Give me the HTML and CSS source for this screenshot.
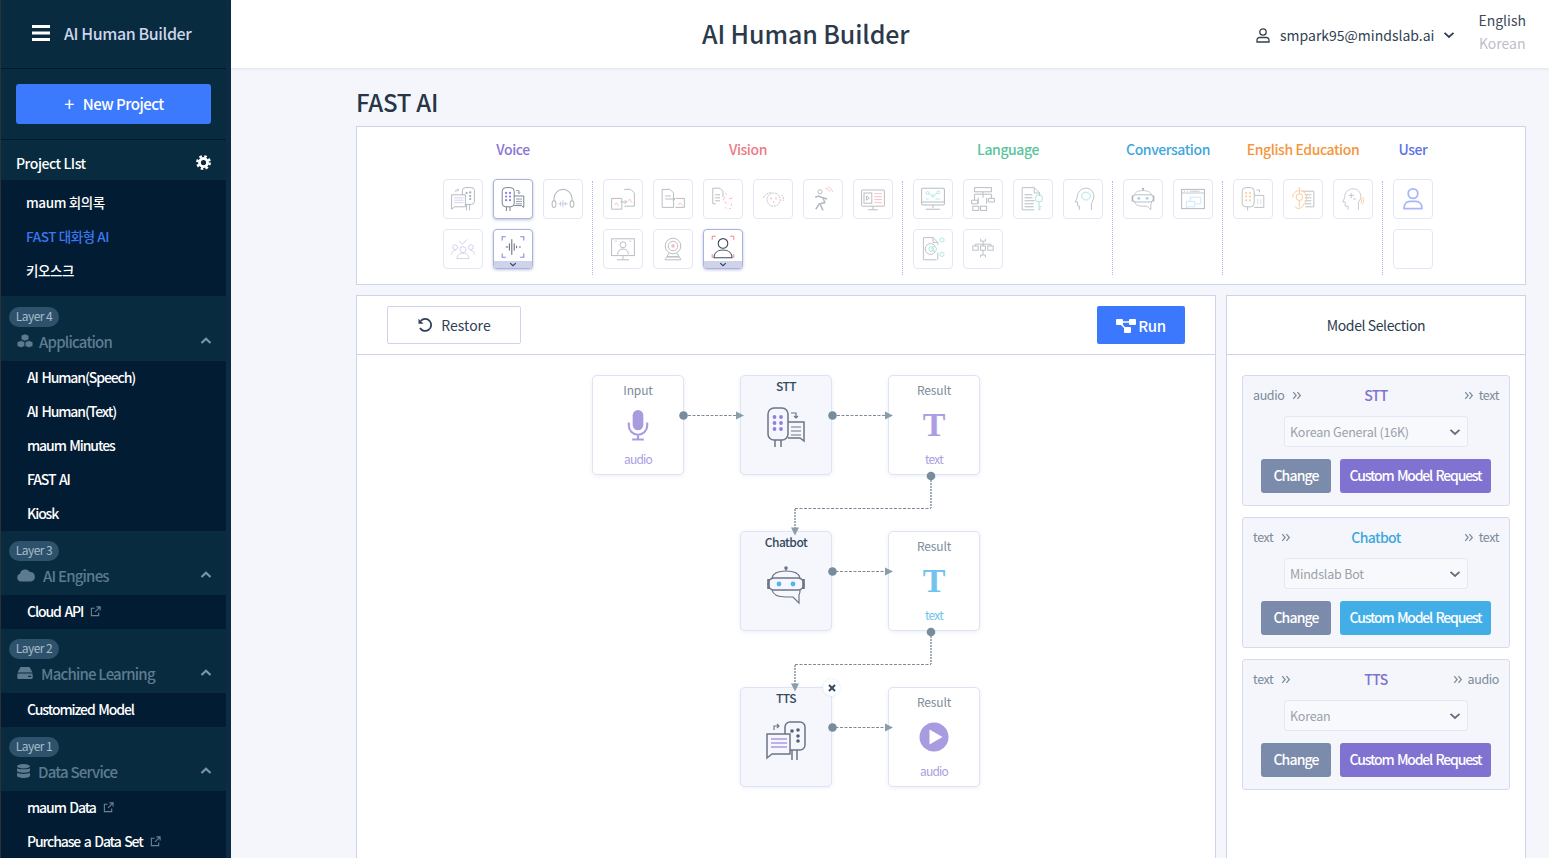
FILE: index.html
```html
<!DOCTYPE html>
<html lang="en">
<head>
<meta charset="utf-8">
<title>AI Human Builder</title>
<link rel="stylesheet" href="styles.css">
</head>
<body>
<svg class="defs" aria-hidden="true">
  <symbol id="i-stt" viewBox="0 0 40 40">
    <g fill="none" stroke="#6b7686" stroke-width="1.5">
      <path d="M22 15h16v19l-4-3H22"/><path d="M25 20h10M25 24h10M25 28h10" stroke-width="1.2"/>
      <rect x="2" y="1" width="20" height="32" rx="6"/>
      <path d="M9 33v7M15 33v7"/><path d="M25 6h5v5m-2-2l2 2 2-2" stroke-width="1.2"/>
    </g>
    <g fill="#8f7fe0"><circle cx="8.5" cy="10" r="1.9"/><circle cx="15" cy="10" r="1.9"/><circle cx="8.5" cy="16" r="1.9"/><circle cx="15" cy="16" r="1.9"/><circle cx="8.5" cy="22" r="1.9"/><circle cx="15" cy="22" r="1.9"/></g>
  </symbol>
  <symbol id="i-tts" viewBox="0 0 40 40">
    <g fill="none" stroke="#6b7686" stroke-width="1.5">
      <path d="M19 13V6a5 5 0 0 1 5-5h10a5 5 0 0 1 5 5v18a5 5 0 0 1-5 5h-10"/>
      <path d="M26 29v10M31 29v10"/>
      <path d="M1 13h23v20H6l-5 4z"/><path d="M8 9V5h5m-2-2l2 2-2 2" stroke-width="1.2"/>
    </g>
    <path d="M5 18h16M5 22h16M5 26h16" stroke="#a99be6" stroke-width="1.3"/>
    <g fill="#55606e"><circle cx="26" cy="10" r="1.8"/><circle cx="32" cy="9" r="1.8"/><circle cx="32" cy="15" r="1.8"/><circle cx="32" cy="20" r="1.8"/></g>
  </symbol>
  <symbol id="i-bot" viewBox="0 0 40 40">
    <g fill="none" stroke="#6b7686" stroke-width="1.2">
      <path d="M6 13c1-5 7-7 14-7s13 2 14 7M6 25c1 5 7 7 14 7h7l6 6v-8c1-1 1-3 1-5"/><path d="M20 6V3"/>
      <rect x="2" y="13" width="36" height="12" rx="6" stroke-width="1.4"/>
      <path d="M2.5 14v10M37.5 14v10" stroke-width="2.6"/>
    </g>
    <circle cx="20" cy="3" r="1.8" fill="#6b7686"/><circle cx="13" cy="19" r="2.4" fill="#4fb6ef"/><circle cx="27" cy="19" r="2.4" fill="#4fb6ef"/>
  </symbol>
  <symbol id="i-phones" viewBox="0 0 40 40">
    <g fill="none" stroke="#7d8590" stroke-width="1.8"><path d="M5 24v-5a15 15 0 0 1 30 0v5"/><rect x="2" y="23" width="6" height="11" rx="3"/><rect x="32" y="23" width="6" height="11" rx="3"/></g>
    <path d="M12 28h16M16 24v8M20 22v12M24 25v6" stroke="#9aa3c9" stroke-width="1.5" fill="none"/>
  </symbol>
  <symbol id="i-crowd" viewBox="0 0 40 40">
    <g fill="none" stroke="#a79be0" stroke-width="1.4"><circle cx="20" cy="21" r="5"/><path d="M10 36c0-6 4-9 10-9s10 3 10 9z"/><circle cx="7" cy="17" r="4"/><circle cx="33" cy="17" r="4"/><path d="M1 29c0-4 3-7 7-7M39 29c0-4-3-7-7-7M13 7l6 5 8-8"/></g>
  </symbol>
  <symbol id="i-wave" viewBox="0 0 40 40">
    <path d="M2 9V3h6M32 3h6v6M38 31v6h-6M8 37H2v-6" fill="none" stroke="#8f7fe0" stroke-width="1.8"/>
    <path d="M8 20h4M14 14v12M18 7v26M22 14v12M26 18v4M30 20h3" fill="none" stroke="#3f4a5a" stroke-width="1.4"/>
  </symbol>
  <symbol id="i-v1" viewBox="0 0 40 40">
    <g fill="none" stroke="#7d8590" stroke-width="1.6"><path d="M1 19h17v18H1zM22 4h11l6 6v22H22"/><path d="M16 25h10m-3-3l3 3-3 3"/></g>
    <path d="M6 30l3-4 4 6M28 24l3-4 4 6" fill="none" stroke="#f17d87" stroke-width="1.3"/>
  </symbol>
  <symbol id="i-v2" viewBox="0 0 40 40">
    <g fill="none" stroke="#7d8590" stroke-width="1.6"><path d="M2 4h13l6 6v24H2zM7 15h9M7 20h16m-3-3l3 3-3 3M24 19h15v15H24"/></g>
    <path d="M29 30l3-4 4 5" fill="none" stroke="#f17d87" stroke-width="1.3"/>
  </symbol>
  <symbol id="i-v3" viewBox="0 0 40 40">
    <g fill="none" stroke="#7d8590" stroke-width="1.6"><path d="M8 28H3V2h12l5 5v10M7 13h8M7 18h8M7 23h8"/></g>
    <path d="M24 10l2 3M30 20l6-2M22 24l4 4M34 28v3M30 36h3M24 34l2 2M20 22l3-5" fill="none" stroke="#f17d87" stroke-width="1.6"/>
  </symbol>
  <symbol id="i-v4" viewBox="0 0 40 40">
    <g fill="none" stroke="#7d8590" stroke-width="1.5" stroke-dasharray="3 1.5"><circle cx="21" cy="21" r="11"/><path d="M4 18c2-6 8-9 14-8M34 13c3 2 4 6 3 10"/></g>
    <g fill="#f17d87"><circle cx="17" cy="19" r="1.4"/><circle cx="25" cy="19" r="1.4"/><circle cx="21" cy="25" r="1.4"/></g>
  </symbol>
  <symbol id="i-v5" viewBox="0 0 40 40">
    <g fill="none" stroke="#7d8590" stroke-width="2.6"><circle cx="15" cy="8" r="3.5" stroke-width="1.6"/><path d="M12 15l8 3 3 8-8 2 5 11M14 28l-6 9M7 17l6-2M20 18l7 2"/></g>
    <path d="M24 2c4 1 6 3 7 6M28 0c4 1 7 4 8 8" fill="none" stroke="#f17d87" stroke-width="1.4"/>
  </symbol>
  <symbol id="i-v6" viewBox="0 0 40 40">
    <g fill="none" stroke="#7d8590" stroke-width="1.6"><rect x="1" y="5" width="38" height="27" rx="1"/><rect x="5" y="10" width="13" height="17"/><path d="M9 15v7l5-3.5zM20 38V32M12 38h16"/></g>
    <path d="M22 11h13M22 16h13M22 21h13M22 26h13" stroke="#f17d87" stroke-width="1.4"/>
  </symbol>
  <symbol id="i-v7" viewBox="0 0 40 40">
    <g fill="none" stroke="#7d8590" stroke-width="1.6"><rect x="1" y="3" width="38" height="28"/><circle cx="20" cy="13" r="5"/><path d="M11 29c0-6 4-9 9-9s9 3 9 9M20 31v6M10 38h20"/></g>
    <path d="M6 7h4M30 7h4" stroke="#f17d87" stroke-width="1.4"/>
  </symbol>
  <symbol id="i-v8" viewBox="0 0 40 40">
    <g fill="none" stroke="#7d8590" stroke-width="1.6"><circle cx="20" cy="15" r="13"/><circle cx="20" cy="15" r="8"/><path d="M13 27l-3 6h20l-3-6M7 38c0-3 2-5 5-5h16c3 0 5 2 5 5z"/></g>
    <circle cx="20" cy="15" r="3" fill="#f17d87"/>
  </symbol>
  <symbol id="i-face" viewBox="0 0 40 40">
    <path d="M2 8V2h6M32 2h6v6M38 32v6M2 32v6" fill="none" stroke="#f17d87" stroke-width="1.6"/>
    <g fill="none" stroke="#3f4a5a" stroke-width="1.8"><circle cx="20" cy="14" r="8"/><path d="M5 38c0-8 6-13 15-13s15 5 15 13z"/></g>
  </symbol>
  <symbol id="i-l1" viewBox="0 0 40 40">
    <g fill="none" stroke="#7d8590" stroke-width="1.7"><rect x="1" y="2" width="38" height="28" rx="2"/><path d="M1 25h38M20 30v5M8 37h24"/></g>
    <g fill="none" stroke="#5fd0bd" stroke-width="1.3"><circle cx="11" cy="10" r="2.5"/><circle cx="29" cy="9" r="2.5"/><circle cx="20" cy="15" r="2"/><path d="M13 11l5 3M22 14l5-4M8 20h5M24 20h8"/></g>
  </symbol>
  <symbol id="i-l2" viewBox="0 0 40 40">
    <g fill="none" stroke="#7d8590" stroke-width="1.6"><rect x="6" y="1" width="28" height="7"/><path d="M20 8v10M20 12h14M20 12H6v10M34 12v7M12 18v10M26 18v10"/><path d="M1 22h10v6H1zM29 19h10v6H29z"/><rect x="3" y="32" width="10" height="7"/><rect x="16" y="32" width="10" height="7"/></g>
  </symbol>
  <symbol id="i-l3" viewBox="0 0 40 40">
    <g fill="none" stroke="#7d8590" stroke-width="1.5"><path d="M22 38H2V1h20l9 9v5M22 1v9h9"/><path d="M6 13h13M6 18h13M6 23h17M6 28h15M6 33h15" stroke-width="1.8"/></g>
    <g fill="none" stroke="#5fd0bd" stroke-width="1.6"><circle cx="30" cy="19" r="6"/><path d="M30 25v14M30 33h4M30 37h3"/></g>
  </symbol>
  <symbol id="i-l4" viewBox="0 0 40 40">
    <path d="M14 38v-6l-3-1V25H7l3-6C10 9 17 2 25 2s13 6 13 14c0 6-3 9-4 12v10" fill="none" stroke="#7d8590" stroke-width="1.5"/>
    <path d="M18 14c0-5 7-7 10-4 5 0 6 7 2 9-2 4-9 3-10 0-2-1-3-3-2-5z" fill="none" stroke="#5fd0bd" stroke-width="1.6"/>
  </symbol>
  <symbol id="i-l5" viewBox="0 0 40 40">
    <g fill="none" stroke="#7d8590" stroke-width="1.5"><path d="M26 38H4V1h16l8 8v4M20 1v8h8M28 26v12"/><path d="M24 16a9 9 0 1 0 0 8"/></g>
    <g fill="none" stroke="#5fd0bd" stroke-width="1.5"><circle cx="35" cy="5" r="3.5"/><circle cx="35" cy="29" r="3.5"/><circle cx="17" cy="20" r="4"/><circle cx="22" cy="20" r="4"/></g>
  </symbol>
  <symbol id="i-l6" viewBox="0 0 40 40">
    <g fill="none" stroke="#7d8590" stroke-width="1.5"><rect x="3" y="15" width="9" height="7"/><rect x="28" y="15" width="9" height="7"/><rect x="16" y="15" width="8" height="7"/><path d="M16 3v4h8V3M20 7v8M20 22v8M16 34v-4h8v4M7 15v-3h26v3"/></g>
  </symbol>
  <symbol id="i-c2" viewBox="0 0 40 40">
    <g fill="none" stroke="#7d8590" stroke-width="1.7"><rect x="1" y="4" width="38" height="32"/><path d="M1 10h38M5 7h2M10 7h2M15 7h16" stroke-width="1.3"/></g>
    <g fill="none" stroke="#8fd3f5" stroke-width="1.4"><path d="M16 17h17v11H16z"/><path d="M9 24h14v9H12l-3 2z" fill="#fff"/></g>
  </symbol>
  <symbol id="i-e1" viewBox="0 0 40 40">
    <g fill="none" stroke="#7d8590" stroke-width="1.5"><rect x="2" y="1" width="20" height="32" rx="6"/><path d="M11 33v6M22 14h16v20H22M26 5h5v4"/><path d="M28 20v9M33 20v9" stroke="#b6bcc6"/></g>
    <g fill="#f8a24d"><circle cx="8.5" cy="10" r="1.7"/><circle cx="15" cy="10" r="1.7"/><circle cx="8.5" cy="16" r="1.7"/><circle cx="15" cy="16" r="1.7"/><circle cx="8.5" cy="22" r="1.7"/><circle cx="15" cy="22" r="1.7"/></g>
  </symbol>
  <symbol id="i-e2" viewBox="0 0 40 40">
    <g fill="none" stroke="#7d8590" stroke-width="1.5"><path d="M18 7h20v26H24"/><path d="M23 13h11M23 18h11M23 23h11M23 28h11"/></g>
    <g fill="none" stroke="#f8a24d" stroke-width="1.6"><path d="M3 18C3 9 9 6 14 6s12 3 12 12c0 6-3 9-5 11-2 7-11 10-14 3"/><circle cx="14" cy="17" r="5.5"/><path d="M14 0v12M14 22v12"/></g>
  </symbol>
  <symbol id="i-e3" viewBox="0 0 40 40">
    <path d="M12 38v-6H7v-7H3l3-7C6 9 12 3 20 3s13 6 13 13c0 4-2 7-4 9v13" fill="none" stroke="#8d949e" stroke-width="1.4"/>
    <path d="M13 14h9M17 10v9M20 20h5" fill="none" stroke="#7d8590" stroke-width="1.3"/>
    <path d="M33 19c1.500 2 1.500 6 0 8M36 17c2 3 2 9 0 12" fill="none" stroke="#f8a24d" stroke-width="1.5"/>
  </symbol>
  <symbol id="i-user" viewBox="0 0 40 40">
    <g fill="none" stroke="#a8b7f7" stroke-width="3"><circle cx="20" cy="11" r="8"/><path d="M5 36c0-8 5-12 10-12h10c5 0 10 4 10 12z" stroke-linejoin="round"/></g>
  </symbol>
  <symbol id="i-ext" viewBox="0 0 12 12">
    <path d="M9.5 7v3.500h-8v-8H5M7 1h4v4M11 1L5.500 6.500" fill="none" stroke="currentColor" stroke-width="1.2"/>
  </symbol>
  <symbol id="i-up" viewBox="0 0 12 8">
    <path d="M1.500 6L6 1.800 10.500 6" fill="none" stroke="currentColor" stroke-width="2.2"/>
  </symbol>
  <symbol id="i-down" viewBox="0 0 12 8">
    <path d="M1.500 1.800L6 6l4.500-4.200" fill="none" stroke="currentColor" stroke-width="1.8"/>
  </symbol>
  <symbol id="i-dbl" viewBox="0 0 12 10">
    <path d="M1.500 1L5 5 1.500 9M6.500 1L10 5 6.500 9" fill="none" stroke="currentColor" stroke-width="1.5"/>
  </symbol>
</svg>

<aside class="sidebar">
  <div class="side-inner">
    <div class="side-top">
      <svg class="burger" viewBox="0 0 18 16"><path d="M0 1.500h18M0 8h18M0 14.500h18" stroke="#fff" stroke-width="3"/></svg>
      <span class="side-brand">AI Human Builder</span>
    </div>
    <div class="side-new"><button class="new-btn"><span class="plus">+</span>New Project</button></div>
    <div class="plist-head">
      <span>Project LIst</span>
      <svg class="gear" viewBox="0 0 16 16"><circle cx="8" cy="8" r="4.3" fill="none" stroke="#fff" stroke-width="3"/><circle cx="8" cy="8" r="6.6" fill="none" stroke="#fff" stroke-width="2.6" stroke-dasharray="2.7 2.48"/></svg>
    </div>
    <ul class="plist">
      <li>maum 회의록</li>
      <li class="current">FAST 대화형 AI</li>
      <li>키오스크</li>
    </ul>
    <div class="layers">
      <section>
        <div class="layer-head">
          <span class="pill">Layer 4</span>
          <div class="layer-title">
            <svg class="li li-cubes" viewBox="0 0 16 14"><g fill="#5d7b90" stroke="#082b40" stroke-width=".5"><path d="M8 0l3.800 1.400v4.200L8 7 4.200 5.600V1.400z"/><path d="M4 6.600l3.800 1.400v4.200L4 13.600.2 12.200V8zM12 6.600L15.800 8v4.200L12 13.600l-3.800-1.400V8z"/></g></svg>
            <span>Application</span>
            <svg class="chev"><use href="#i-up"/></svg>
          </div>
        </div>
        <ul class="sub">
          <li>AI Human(Speech)</li><li>AI Human(Text)</li><li>maum Minutes</li><li>FAST AI</li><li>Kiosk</li>
        </ul>
      </section>
      <section>
        <div class="layer-head">
          <span class="pill">Layer 3</span>
          <div class="layer-title">
            <svg class="li li-cloud" viewBox="0 0 18 13"><path d="M4 13a4 4 0 0 1-1-7.800A5.500 5.500 0 0 1 13 3.500 4.800 4.800 0 0 1 14 13z" fill="#5d7b90"/></svg>
            <span>AI Engines</span>
            <svg class="chev"><use href="#i-up"/></svg>
          </div>
        </div>
        <ul class="sub">
          <li>Cloud API<svg class="ext"><use href="#i-ext"/></svg></li>
        </ul>
      </section>
      <section>
        <div class="layer-head">
          <span class="pill">Layer 2</span>
          <div class="layer-title">
            <svg class="li li-hdd" viewBox="0 0 16 12"><path d="M3.500 0h9L15.500 5.500H.5zM1.500 6.500h13a1.200 1.200 0 0 1 1.200 1.200v3a1.200 1.200 0 0 1-1.200 1.200h-13A1.200 1.200 0 0 1 .3 10.700v-3a1.200 1.200 0 0 1 1.200-1.200z" fill="#5d7b90"/><path d="M11 9.300h3.200" stroke="#0a2c41" stroke-width="1.2"/></svg>
            <span>Machine Learning</span>
            <svg class="chev"><use href="#i-up"/></svg>
          </div>
        </div>
        <ul class="sub">
          <li>Customized Model</li>
        </ul>
      </section>
      <section>
        <div class="layer-head">
          <span class="pill">Layer 1</span>
          <div class="layer-title">
            <svg class="li li-db" viewBox="0 0 13 14"><g fill="#5d7b90"><ellipse cx="6.500" cy="2.200" rx="6.500" ry="2.200"/><path d="M0 4.200c1.500 1.500 11.500 1.500 13 0v2.500c0 2.600-13 2.600-13 0zM0 8.800c1.500 1.500 11.500 1.500 13 0v3c0 2.900-13 2.900-13 0z"/></g></svg>
            <span>Data Service</span>
            <svg class="chev"><use href="#i-up"/></svg>
          </div>
        </div>
        <ul class="sub">
          <li>maum Data<svg class="ext"><use href="#i-ext"/></svg></li>
          <li>Purchase a Data Set<svg class="ext"><use href="#i-ext"/></svg></li>
        </ul>
      </section>
    </div>
  </div>
</aside>

<div class="main">
  <header class="topbar">
    <h1 class="top-title">AI Human Builder</h1>
    <div class="account">
      <svg class="acc-icon" viewBox="0 0 14 15"><g fill="none" stroke="#333f4d" stroke-width="1.3"><circle cx="7" cy="4" r="3.2"/><path d="M1 14v-2a2.500 2.500 0 0 1 2.500-2.500h7A2.500 2.500 0 0 1 13 12v2z"/></g></svg>
      <span class="email">smpark95@mindslab.ai</span>
      <svg class="acc-chev"><use href="#i-down"/></svg>
    </div>
    <div class="langs"><span class="lang-on">English</span><span class="lang-off">Korean</span></div>
  </header>

  <div class="content">
    <h2 class="page-title">FAST AI</h2>

    <div class="toolbox">
      <div class="tgroup t-voice">
        <h3>Voice</h3>
        <div class="ticons">
          <button class="tb dim"><svg><use href="#i-tts"/></svg></button>
          <button class="tb on"><svg><use href="#i-stt"/></svg></button>
          <button class="tb dim"><svg><use href="#i-phones"/></svg></button>
          <button class="tb dim"><svg><use href="#i-crowd"/></svg></button>
          <button class="tb on more"><svg><use href="#i-wave"/></svg><span class="band"><svg><use href="#i-down"/></svg></span></button>
        </div>
      </div>
      <div class="tgroup t-vision">
        <h3>Vision</h3>
        <div class="ticons">
          <button class="tb dim"><svg><use href="#i-v1"/></svg></button>
          <button class="tb dim"><svg><use href="#i-v2"/></svg></button>
          <button class="tb dim"><svg><use href="#i-v3"/></svg></button>
          <button class="tb dim"><svg><use href="#i-v4"/></svg></button>
          <button class="tb dim"><svg><use href="#i-v5"/></svg></button>
          <button class="tb dim"><svg><use href="#i-v6"/></svg></button>
          <button class="tb dim"><svg><use href="#i-v7"/></svg></button>
          <button class="tb dim"><svg><use href="#i-v8"/></svg></button>
          <button class="tb on more"><svg><use href="#i-face"/></svg><span class="band"><svg><use href="#i-down"/></svg></span></button>
        </div>
      </div>
      <div class="tgroup t-lang">
        <h3>Language</h3>
        <div class="ticons">
          <button class="tb dim"><svg><use href="#i-l1"/></svg></button>
          <button class="tb dim"><svg><use href="#i-l2"/></svg></button>
          <button class="tb dim"><svg><use href="#i-l3"/></svg></button>
          <button class="tb dim"><svg><use href="#i-l4"/></svg></button>
          <button class="tb dim"><svg><use href="#i-l5"/></svg></button>
          <button class="tb dim"><svg><use href="#i-l6"/></svg></button>
        </div>
      </div>
      <div class="tgroup t-conv">
        <h3>Conversation</h3>
        <div class="ticons">
          <button class="tb dim"><svg><use href="#i-bot"/></svg></button>
          <button class="tb dim"><svg><use href="#i-c2"/></svg></button>
        </div>
      </div>
      <div class="tgroup t-eng">
        <h3>English Education</h3>
        <div class="ticons">
          <button class="tb dim"><svg><use href="#i-e1"/></svg></button>
          <button class="tb dim"><svg><use href="#i-e2"/></svg></button>
          <button class="tb dim"><svg><use href="#i-e3"/></svg></button>
        </div>
      </div>
      <div class="tgroup t-user">
        <h3>User</h3>
        <div class="ticons">
          <button class="tb"><svg><use href="#i-user"/></svg></button>
          <button class="tb"></button>
        </div>
      </div>
    </div>

    <div class="work">
      <section class="flow-panel">
        <div class="flow-bar">
          <button class="restore">
            <svg viewBox="0 0 16 16"><path d="M3.800 3.800A6 6 0 1 1 3 11" fill="none" stroke="#2f4059" stroke-width="1.8"/><path d="M1.500 1.800v5h5z" fill="#2f4059"/></svg>
            Restore
          </button>
          <button class="run">
            <svg viewBox="0 0 20 15"><g fill="#fff"><rect x="0" y="1" width="7" height="6" rx="1"/><rect x="13" y="1" width="7" height="6" rx="1"/><rect x="8" y="9" width="7" height="6" rx="1"/></g><path d="M5 4h10M4 5l7 7" stroke="#fff" stroke-width="1.6"/></svg>
            Run
          </button>
        </div>
        <div class="canvas">
          <svg class="wires" viewBox="357 355 858 503">
            <g class="wire">
              <path d="M688 415.500h48M837 415.500h48M831 571.500h54M831 727.500h54M795 508.500h136M795 664.500h136"/>
              <path class="wv" d="M931 480v28M795 509v19M931 636v28M795 665v19"/>
            </g>
            <g fill="#8b9dab">
              <path d="M736 411.500l8 4-8 4zM885 411.500l8 4-8 4zM885 567.500l8 4-8 4zM885 723.500l8 4-8 4z"/>
              <path d="M791 527.500h8l-4 8zM791 683.500h8l-4 8z"/>
            </g>
            <g fill="#778c9c">
              <circle cx="683.500" cy="415.500" r="4.300"/><circle cx="832.500" cy="415.500" r="4.300"/><circle cx="931" cy="476" r="4.300"/>
              <circle cx="832.500" cy="571.500" r="4.300"/><circle cx="931" cy="632" r="4.300"/><circle cx="832.500" cy="727.500" r="4.300"/>
            </g>
          </svg>

          <div class="node col-a row-1">
            <span class="n-label">Input</span>
            <svg class="n-mic" viewBox="0 0 22 32"><rect x="5.500" y="0" width="11" height="21" rx="5.500" fill="#a99be0"/><path d="M1.500 13v3a9.500 9.500 0 0 0 19 0v-3M11 26v4M5 30.500h12" fill="none" stroke="#a99be0" stroke-width="2.2"/></svg>
            <span class="n-type purple">audio</span>
          </div>
          <div class="node model col-b row-1">
            <span class="n-name">STT</span>
            <svg class="n-icon"><use href="#i-stt"/></svg>
          </div>
          <div class="node col-c row-1">
            <span class="n-label">Result</span>
            <span class="n-t purple">T</span>
            <span class="n-type purple">text</span>
          </div>
          <div class="node model col-b row-2">
            <span class="n-name">Chatbot</span>
            <svg class="n-icon low"><use href="#i-bot"/></svg>
          </div>
          <div class="node col-c row-2">
            <span class="n-label">Result</span>
            <span class="n-t sky">T</span>
            <span class="n-type sky">text</span>
          </div>
          <div class="node model col-b row-3">
            <span class="n-name">TTS</span>
            <svg class="n-icon low"><use href="#i-tts"/></svg>
            <span class="n-close"><svg viewBox="0 0 10 10"><path d="M2 2l6 6M8 2l-6 6" stroke="#2f4a66" stroke-width="2"/></svg></span>
          </div>
          <div class="node col-c row-3">
            <span class="n-label">Result</span>
            <svg class="n-play" viewBox="0 0 30 30"><circle cx="15" cy="15" r="14.500" fill="#a99be0"/><path d="M10.500 7.500l13 7.500-13 7.500z" fill="#fff"/></svg>
            <span class="n-type purple">audio</span>
          </div>
        </div>
      </section>

      <section class="model-panel">
        <div class="model-head">Model Selection</div>
        <div class="model-list">
          <div class="mcard">
            <div class="mrow">
              <span class="mio">audio<svg><use href="#i-dbl"/></svg></span>
              <span class="mname c-purple">STT</span>
              <span class="mio right"><svg><use href="#i-dbl"/></svg>text</span>
            </div>
            <div class="msel">Korean General (16K)<svg><use href="#i-down"/></svg></div>
            <div class="mbtns"><button class="mchange">Change</button><button class="mcustom">Custom Model Request</button></div>
          </div>
          <div class="mcard">
            <div class="mrow">
              <span class="mio">text<svg><use href="#i-dbl"/></svg></span>
              <span class="mname c-sky">Chatbot</span>
              <span class="mio right"><svg><use href="#i-dbl"/></svg>text</span>
            </div>
            <div class="msel">Mindslab Bot<svg><use href="#i-down"/></svg></div>
            <div class="mbtns"><button class="mchange">Change</button><button class="mcustom sky-btn">Custom Model Request</button></div>
          </div>
          <div class="mcard">
            <div class="mrow">
              <span class="mio">text<svg><use href="#i-dbl"/></svg></span>
              <span class="mname c-purple">TTS</span>
              <span class="mio right"><svg><use href="#i-dbl"/></svg>audio</span>
            </div>
            <div class="msel">Korean<svg><use href="#i-down"/></svg></div>
            <div class="mbtns"><button class="mchange">Change</button><button class="mcustom">Custom Model Request</button></div>
          </div>
        </div>
      </section>
    </div>
  </div>
</div>
</body>
</html>
```
FILE: styles.css
```css
* { box-sizing: border-box; }
html, body { margin: 0; height: 858px; overflow: hidden; }
body {
  display: flex;
  font-family: "Noto Sans CJK KR", "Noto Sans", sans-serif;
  font-size: 14px;
  color: #2f3f52;
  background: #f4f6fb;
}
h1, h2, h3, ul { margin: 0; padding: 0; font-weight: 500; list-style: none; }
button { font-family: inherit; cursor: pointer; padding: 0; }
.defs { position: absolute; width: 0; height: 0; }

/* sidebar */
.sidebar { width: 231px; flex: none; height: 858px; overflow: hidden; background: #0d2b42; padding-right: 5px; border-left: 1px solid #2a3138; }
.side-inner { background: #082b40; height: 100%; }
.side-top { height: 69px; display: flex; align-items: center; padding: 0 0 3px 31px; border-bottom: 1px solid #03192b; }
.burger { width: 18px; height: 16px; margin-right: 14px; flex: none; }
.side-brand { font-size: 16px; font-weight: 500; color: #cfd5ea; letter-spacing: -.4px; }
.side-new { height: 71px; padding: 15px; border-bottom: 1px solid #03192b; }
.new-btn { width: 195px; height: 40px; padding: 0 0 2px 1px; border: 0; border-radius: 3px; background: #3b7afd; color: #fff; font-size: 15px; font-weight: 500; letter-spacing: -.5px; }
.plus { font-size: 18px; font-weight: 400; margin-right: 9px; line-height: 1; vertical-align: -1px; }
.plist-head { height: 40px; display: flex; align-items: center; justify-content: space-between; padding: 4px 15px 0; color: #fff; font-size: 14px; font-weight: 500; letter-spacing: -.45px; }
.plist-head span { margin-top: 2px; }
.gear { width: 15px; height: 15px; }
.plist { background: #021c33; padding: 6px 0 8px 25px; height: 116px; color: #fff; letter-spacing: -.4px; }
.plist li { height: 34px; line-height: 33px; font-size: 13.5px; font-weight: 500; }
.plist .current { color: #3b78f0; }
.layers { padding-top: 1px; }
.layer-head { height: 64px; padding: 10px 0 0 8px; }
.pill { display: block; width: 50px; height: 20px; border-radius: 10px; background: #2e526b; color: #a9bccb; font-size: 12px; line-height: 18px; text-align: center; letter-spacing: -.55px; }
.layer-title { height: 28px; padding: 0 14px 0 8px; display: flex; align-items: center; color: #5d7b90; font-size: 15px; font-weight: 500; letter-spacing: -.8px; }
.li { width: 16px; height: 14px; margin-right: 7px; flex: none; }
.li-cubes { margin-right: 6px; }
.li-hdd { margin-right: 8px; }
.li-cloud { width: 18px; margin-right: 8px; }
.li-db { width: 13px; margin-right: 8px; }
.chev { width: 12px; height: 8px; margin-left: auto; color: #7d95a6; }
.sub { background: #021c33; color: #fff; padding-left: 26px; }
.sub li { height: 34px; padding-bottom: 2px; font-size: 14px; font-weight: 500; letter-spacing: -1.1px; word-spacing: 1.5px; display: flex; align-items: center; }
.ext { width: 11px; height: 11px; margin-left: 7px; color: #6c8296; }

/* top bar */
.main { flex: 1; min-width: 0; display: flex; flex-direction: column; }
.topbar { height: 68px; background: #fff; box-shadow: 0 1px 3px rgba(60,70,120,.1); display: flex; align-items: center; padding: 0 23px 0 0; flex: none; }
.top-title { font-size: 25px; color: #2b3a4a; font-weight: 500; margin: 0 0 2px 471px; letter-spacing: -.1px; }
.account { display: flex; align-items: center; margin: 2px 0 0 auto; }
.acc-icon { width: 14px; height: 15px; margin-right: 10px; }
.email { font-size: 14px; color: #2f3f52; }
.acc-chev { width: 12px; height: 8px; margin-left: 9px; color: #2f3f52; }
.langs { display: flex; flex-direction: column; margin-left: 23px; padding-bottom: 5px; font-size: 14px; line-height: 23px; text-align: center; }
.lang-on { color: #3c4a5a; }
.lang-off { color: #bcc0c8; }

/* content */
.content { flex: 1; padding: 0 23px 0 125px; min-height: 0; }
.page-title { font-size: 24px; line-height: 35px; margin-top: 16px; height: 42px; color: #263648; letter-spacing: -.25px; }
.toolbox { height: 159px; background: #fff; border: 1px solid #cdd3ea; display: flex; padding-left: 76px; }
.tgroup { padding: 0 10px; flex: none; }
.tgroup h3 { font-size: 14px; line-height: 20px; height: 52px; padding-top: 12px; text-align: center; letter-spacing: -.42px; white-space: nowrap; }
.t-voice { width: 160px; }
.t-vision { width: 310px; }
.t-lang { width: 210px; }
.t-conv { width: 110px; }
.t-eng { width: 160px; }
.t-user { width: 60px; }
.t-voice h3 { color: #8875d6; }
.t-vision h3 { color: #ec7a86; }
.t-lang h3 { color: #57c49c; }
.t-conv h3 { color: #3ea7de; }
.t-eng h3 { color: #f5953c; }
.t-user h3 { color: #5c72e6; }
.ticons { display: flex; flex-wrap: wrap; gap: 10px; position: relative; margin-right: -1px; }
.tgroup + .tgroup .ticons::before { content: ""; position: absolute; left: -11px; top: 2px; height: 94px; border-left: 1px dotted #aebbe6; }
.tb { position: relative; width: 40px; height: 40px; border: 1px solid #e4e6f6; border-radius: 4px; background: #fff; display: flex; align-items: center; justify-content: center; overflow: hidden; }
.tb > svg { width: 24px; height: 24px; flex: none; }
.tb.dim > svg { opacity: .55; }
.tb.on { border-color: #a9b3df; box-shadow: 0 1px 3px rgba(90,100,170,.4); }
.tb.more > svg { margin-bottom: 5px; }
.band { position: absolute; left: 0; right: 0; bottom: 0; height: 7px; background: #ced3ea; color: #2f3f66; display: flex; justify-content: center; align-items: center; }
.band svg { width: 8px; height: 5px; }

/* work area */
.work { display: flex; gap: 10px; margin-top: 10px; }
.flow-panel { width: 860px; height: 600px; background: #fff; border: 1px solid #cdd3ea; }
.flow-bar { height: 59px; display: flex; justify-content: space-between; align-items: center; padding: 0 30px; border-bottom: 1px solid #cdd3ea; }
.restore { width: 134px; height: 38px; border: 1px solid #cdd3ea; border-radius: 2px; background: #fff; color: #2f4059; font-size: 14px; display: flex; align-items: center; justify-content: center; gap: 8px; }
.restore svg { width: 16px; height: 16px; }
.run { width: 88px; height: 38px; border: 0; border-radius: 2px; background: #3b78fd; color: #fff; font-size: 15px; font-weight: 500; display: flex; align-items: center; justify-content: center; gap: 2px; letter-spacing: -.4px; }
.run svg { width: 20px; height: 15px; }
.canvas { position: relative; height: 503px; }
.wires { position: absolute; left: 0; top: 0; width: 858px; height: 503px; z-index: 2; pointer-events: none; }
.wire path { fill: none; stroke: #7d8c9c; stroke-width: 1; stroke-dasharray: 3 1.5; }
.wire .wv { stroke: #a3b0bb; stroke-width: 2; stroke-dasharray: 2 1; }
.node { position: absolute; width: 92px; height: 100px; background: #fff; border: 1px solid #e0e2f5; border-radius: 5px; box-shadow: 0 1px 4px rgba(110,120,190,.13); display: flex; flex-direction: column; align-items: center; }
.node.model { background: #f5f7fc; }
.col-a { left: 235px; }
.col-b { left: 383px; }
.col-c { left: 531px; }
.row-1 { top: 20px; }
.row-2 { top: 176px; }
.row-3 { top: 332px; }
.n-label { font-size: 12px; line-height: 18px; margin-top: 5px; color: #7c8b99; letter-spacing: -.12px; }
.n-name { font-size: 12px; line-height: 18px; margin-top: 1px; color: #34495f; font-weight: 500; letter-spacing: -.5px; }
.n-type { position: absolute; bottom: 7px; font-size: 12px; line-height: 16px; letter-spacing: -.8px; }
.purple { color: #ab9ee3; }
.sky { color: #72c3ee; }
.n-mic { width: 22px; height: 31px; margin-top: 11px; }
.n-icon { width: 40px; height: 40px; margin-top: 12px; }
.n-icon.low { margin-top: 14px; }
.n-t { font-family: "Liberation Serif", serif; font-weight: 700; font-size: 34px; line-height: 34px; margin-top: 9px; }
.n-play { width: 30px; height: 30px; margin-top: 11px; }
.n-close { position: absolute; right: -9px; top: -9px; width: 17px; height: 17px; border-radius: 50%; background: #fff; box-shadow: 0 0 2px rgba(110,120,190,.25); display: flex; align-items: center; justify-content: center; z-index: 3; }
.n-close svg { width: 10px; height: 10px; }

/* model panel */
.model-panel { width: 300px; height: 600px; background: #fff; border: 1px solid #cdd3ea; }
.model-head { height: 59px; border-bottom: 1px solid #cdd3ea; display: flex; align-items: center; justify-content: center; font-size: 14px; color: #2a3b4e; letter-spacing: -.4px; }
.model-list { padding: 20px 15px 0; display: flex; flex-direction: column; gap: 11px; }
.mcard { height: 131px; background: #f4f6fb; border: 1px solid #d6daec; border-radius: 3px; padding: 0 10px; }
.mrow { height: 40px; padding-bottom: 2px; display: flex; align-items: center; justify-content: center; position: relative; }
.mname { font-size: 14px; font-weight: 500; letter-spacing: -.6px; }
.c-purple { color: #7f72d0; }
.c-sky { color: #3ea7de; }
.mio { position: absolute; left: 0; top: 10px; font-size: 12.5px; line-height: 18px; color: #7c8b99; display: flex; align-items: center; gap: 8px; letter-spacing: -.4px; }
.mio.right { left: auto; right: 0; gap: 5px; }
.mio svg { width: 10px; height: 9px; color: #7c8b99; }
.msel { width: 184px; height: 31px; margin-left: 31px; background: #f8f9fc; border: 1px solid #e5e8f3; border-radius: 3px; display: flex; align-items: center; justify-content: space-between; padding: 0 6px 0 5px; font-size: 12.5px; color: #9aa1aa; letter-spacing: -.2px; }
.msel svg { width: 12px; height: 8px; color: #5f6f80; }
.mbtns { display: flex; gap: 9px; margin: 12px 0 0 8px; }
.mchange, .mcustom { height: 34px; padding-bottom: 2px; border: 0; border-radius: 3px; color: #fff; font-size: 14px; font-weight: 500; letter-spacing: -1.2px; word-spacing: 1.5px; }
.mchange { width: 70px; background: #7b8bab; letter-spacing: -.85px; }
.mcustom { width: 151px; background: #7f72d0; }
.mcustom.sky-btn { background: #41aee8; }
```
